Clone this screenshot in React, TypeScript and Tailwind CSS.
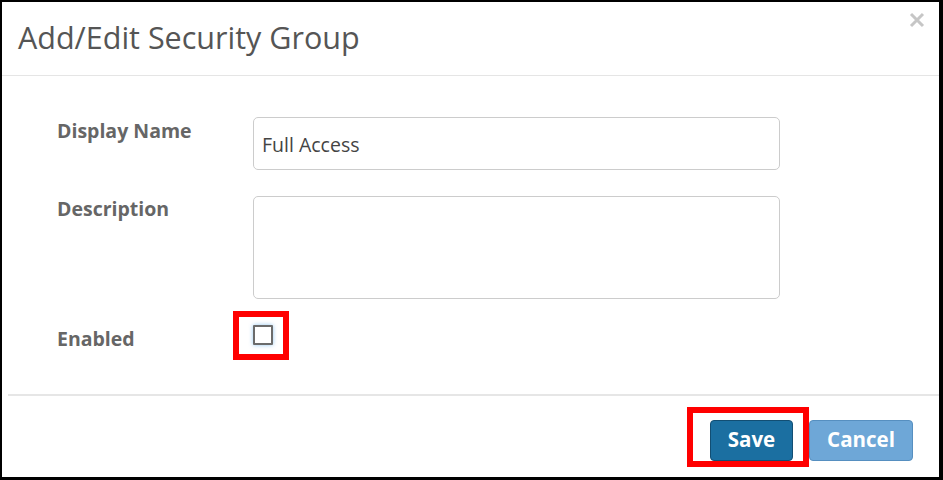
import React from "react";

export default function App() {
  const font = { fontFamily: '"Open Sans", "Noto Sans", Arial, sans-serif' };
  return (
    <div
      className="w-[943px] h-[480px] bg-white border-l-2 border-t-2 border-r-4 border-b-[3px] border-black flex flex-col box-border"
      style={font}
    >
      {/* Header */}
      <div className="h-[74px] shrink-0 border-b border-[#e5e5e5] flex items-center justify-between pl-[16px] pr-[14px]">
        <h1 className="text-[30.5px] leading-none text-[#555555] font-normal pb-[3px]">
          Add/Edit Security Group
        </h1>
        <button className="self-start mt-[10px] w-[16px] h-[16px]" aria-label="Close">
          <svg width="16" height="16" viewBox="0 0 16 16">
            <path d="M2 2 L14 14 M14 2 L2 14" stroke="#c6c6c6" strokeWidth="3" strokeLinecap="butt" />
          </svg>
        </button>
      </div>

      {/* Body */}
      <div className="flex-1 pt-[41px] pl-[55px]">
        <div className="grid grid-cols-[196px_527px] gap-y-[26px]">
          <label className="text-[19.5px] leading-[26px] font-bold text-[#666666] pt-[1px]">Display Name</label>
          <div className="h-[53px] border border-[#cccccc] rounded-[5px] flex items-center pl-[8px] pt-[3px] text-[19.5px] text-[#444444]">
            Full Access
          </div>

          <label className="text-[19.5px] leading-[26px] font-bold text-[#666666]">Description</label>
          <div className="h-[103px] border border-[#cccccc] rounded-[5px]" />

          <label className="text-[19.5px] leading-[26px] font-bold text-[#666666] pt-[1px]">Enabled</label>
          <div className="h-[20px]">
            <div className="relative w-[20px] h-[20px] border-2 border-[#6b6b6b] rounded-[1px] bg-white shadow-[0_0_4px_rgba(102,175,233,0.7)]">
              <div className="absolute left-[-22px] top-[-16px] w-[56px] h-[49px] border-[6px] border-[#ff0000]" />
            </div>
          </div>
        </div>
      </div>

      {/* Footer */}
      <div className="h-[83px] shrink-0 ml-[6px] border-t-2 border-[#e6e6e6] flex justify-end items-start pt-[24px] pr-[26px] gap-[16px]">
        <div className="relative">
          <button className="w-[83px] h-[41px] rounded-[4px] bg-[#1b6fa1] border border-[#124e73] text-white text-[20.5px] font-bold leading-none pb-[2px]">
            Save
          </button>
          <div className="absolute left-[-23px] top-[-13px] w-[122px] h-[60px] border-[6px] border-[#ff0000] pointer-events-none" />
        </div>
        <button className="w-[104px] h-[41px] rounded-[4px] bg-[#6ea7d7] border border-[#568fc0] text-white text-[20.5px] font-bold leading-none pb-[2px]">
          Cancel
        </button>
      </div>
    </div>
  );
}
